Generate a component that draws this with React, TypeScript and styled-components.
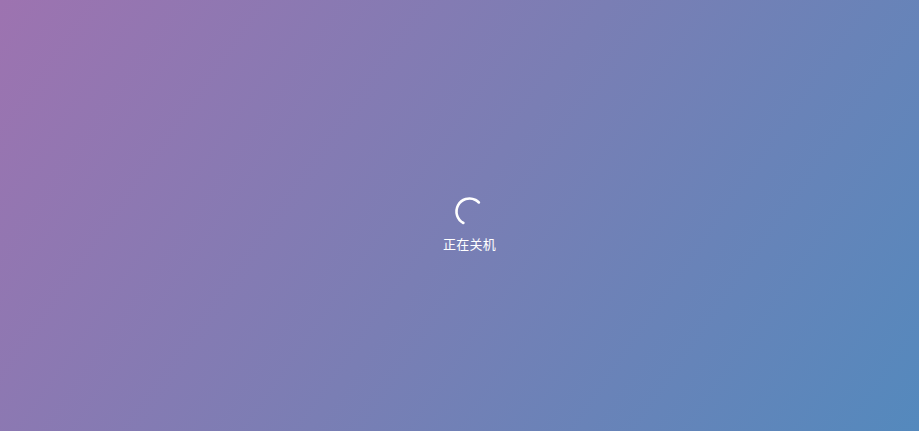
import React from "react";
import styled, { createGlobalStyle } from "styled-components";

const Global = createGlobalStyle`
  html, body { margin: 0; padding: 0; height: 100%; }
  body { font-family: "Noto Sans CJK SC", "Noto Sans", sans-serif; }
  #root { height: 100%; }
`;

const Screen = styled.div`
  width: 100%;
  height: 100vh;
  box-sizing: border-box;
  padding: 18px 0 0 20px;
  display: flex;
  flex-direction: column;
  align-items: center;
  justify-content: center;
  gap: 8px;
  background: linear-gradient(125deg, #9d73b0 0%, #7a7eb4 50%, #5489bd 100%);
  overflow: hidden;
`;

const Spinner = styled.svg`
  width: 31px;
  height: 31px;
  display: block;
`;

const Label = styled.div`
  color: #ffffff;
  font-size: 13px;
  line-height: 18px;
  letter-spacing: 0.2px;
`;

export default function App() {
  const r = 13;
  const c = 2 * Math.PI * r;
  const arc = (197 / 360) * c;
  return (
    <>
      <Global />
      <Screen>
        <Spinner viewBox="0 0 31 31">
          <circle
            cx="15.5"
            cy="15.5"
            r={r}
            fill="none"
            stroke="#ffffff"
            strokeWidth="2.6"
            strokeLinecap="round"
            strokeDasharray={`${arc} ${c}`}
            transform="rotate(118 15.5 15.5)"
          />
        </Spinner>
        <Label>正在关机</Label>
      </Screen>
    </>
  );
}
